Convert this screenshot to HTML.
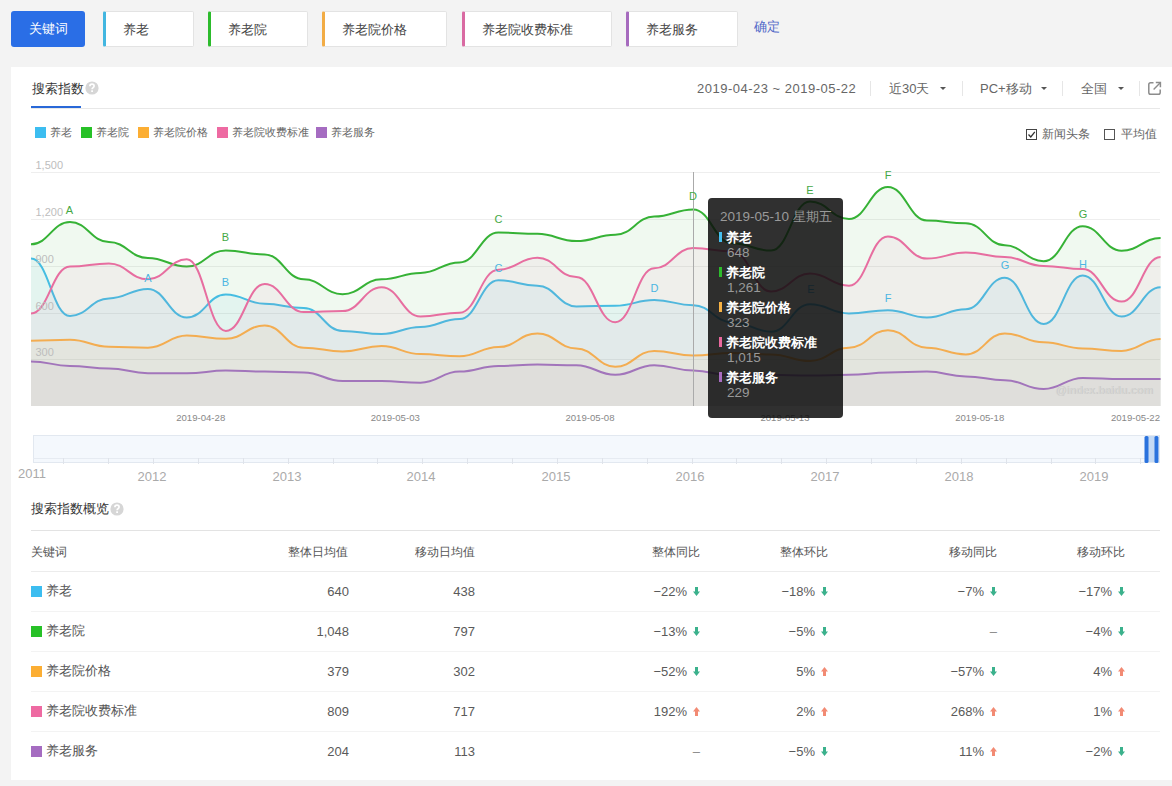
<!DOCTYPE html>
<html><head><meta charset="utf-8">
<style>
*{box-sizing:border-box;margin:0;padding:0}
html,body{width:1172px;height:786px;overflow:hidden;background:#f3f3f3;font-family:"Liberation Sans",sans-serif;color:#333}
.abs{position:absolute;white-space:nowrap}
.kbtn{position:absolute;top:11px;height:36px;background:#fff;border:1px solid #e3e3e3;border-left:3px solid;border-radius:2px;font-size:12.5px;color:#444;line-height:36px;padding-left:17px}
.main{position:absolute;left:11px;top:67px;width:1161px;height:713px;background:#fff}
.qm{position:absolute;width:13px;height:13px;border-radius:50%;background:#d4d4d4;color:#fff;font-size:11px;font-weight:bold;text-align:center;line-height:13px}
.sep{position:absolute;top:81px;width:1px;height:15px;background:#e6e6e6}
.arr{position:absolute;width:0;height:0;border-left:3px solid transparent;border-right:3px solid transparent;border-top:3px solid #555;top:87px}
.ctl{font-size:13px;color:#666;top:81px;line-height:16px}
.lg{position:absolute;top:127px;width:11px;height:11px}
.lgt{position:absolute;top:125px;font-size:11px;color:#666;line-height:14px}
svg text{font-family:"Liberation Sans",sans-serif}
.yl{font-size:11px;fill:#bdbdbd}
.mk{font-size:11px;text-anchor:middle}
.xl{font-size:9.6px;fill:#888;text-anchor:middle}
.yr{font-size:13px;fill:#aaa;text-anchor:middle}
.tt{position:absolute;left:708px;top:198px;width:135px;height:220px;background:rgba(12,12,12,0.85);border-radius:4px}
.tt .ti{position:absolute;left:12px;top:10px;font-size:13.5px;color:#9a9a9a;line-height:18px;white-space:nowrap}
.tt .bar{position:absolute;left:11px;width:3px;height:10px}
.tt .nm{position:absolute;left:18px;margin-top:1px;font-size:13px;color:#fff;font-weight:600;line-height:16px;white-space:nowrap}
.tt .vl{position:absolute;left:19px;margin-top:1px;font-size:13.5px;color:#999;line-height:16px;white-space:nowrap}
.th{position:absolute;top:544px;font-size:12px;color:#555;line-height:16px;white-space:nowrap}
.row{position:absolute;left:31px;width:1129px;height:1px;background:#f3f3f3}
.cell{position:absolute;font-size:13px;color:#5a5a5a;line-height:16px;white-space:nowrap;margin-top:1px}
.sq{position:absolute;left:31px;width:11px;height:11px}
.kw{position:absolute;left:46px;font-size:12.7px;color:#555;line-height:16px;white-space:nowrap}
.dn,.up{position:absolute;width:7px;height:9px}
</style></head><body>
<!-- top keyword row -->
<div class="abs" style="left:11px;top:11px;width:74px;height:36px;background:#2a6ee6;border-radius:3px;color:#fff;font-size:13px;font-weight:500;line-height:36px;text-align:center">关键词</div>
<div class="kbtn" style="left:103px;width:91px;border-left-color:#42b6e0">养老</div>
<div class="kbtn" style="left:208px;width:100px;border-left-color:#2cbb2c">养老院</div>
<div class="kbtn" style="left:322px;width:125px;border-left-color:#f2ac45">养老院价格</div>
<div class="kbtn" style="left:462px;width:150px;border-left-color:#d96aa2">养老院收费标准</div>
<div class="kbtn" style="left:626px;width:112px;border-left-color:#a66bbe">养老服务</div>
<div class="abs" style="left:754px;top:19px;font-size:12.5px;color:#5068c8;line-height:16px">确定</div>

<div class="main"></div>
<!-- header -->
<div class="abs" style="left:31.5px;top:80.5px;font-size:12.5px;color:#333;line-height:16px">搜索指数</div>
<svg class="abs" style="left:84px;top:80px" width="16" height="16" viewBox="0 0 16 16"><circle cx="8" cy="8" r="6.6" fill="#d6d6d6"/><path d="M5.9 6.2Q5.9 4.2 8 4.2Q10.1 4.2 10.1 6Q10.1 7 9 7.7Q8.1 8.2 8.1 9.3" fill="none" stroke="#fff" stroke-width="1.7"/><rect x="7.2" y="10.3" width="1.8" height="1.7" fill="#fff"/></svg>
<div class="abs" style="left:31px;top:108px;width:1129px;height:1px;background:#e8e8e8"></div>
<div class="abs" style="left:31px;top:106px;width:50px;height:2px;background:#2868d8"></div>

<div class="abs ctl" style="left:697px;letter-spacing:0.5px">2019-04-23 ~ 2019-05-22</div>
<div class="sep" style="left:870px"></div>
<div class="abs ctl" style="left:889px">近30天</div>
<div class="arr" style="left:940px"></div>
<div class="sep" style="left:962px"></div>
<div class="abs ctl" style="left:980px">PC+移动</div>
<div class="arr" style="left:1041px"></div>
<div class="sep" style="left:1062px"></div>
<div class="abs ctl" style="left:1081px">全国</div>
<div class="arr" style="left:1118px"></div>
<div class="sep" style="left:1139px"></div>
<svg class="abs" style="left:1147px;top:81px" width="15" height="15" viewBox="0 0 15 15"><path d="M6.5 1.8H3.6Q1.8 1.8 1.8 3.6V11.4Q1.8 13.2 3.6 13.2H11.4Q13.2 13.2 13.2 11.4V8.5" fill="none" stroke="#8c8c8c" stroke-width="1.5"/><path d="M8.8 1.6H13.4V6.2" fill="none" stroke="#8c8c8c" stroke-width="1.5"/><path d="M13 2L6.6 8.4" fill="none" stroke="#8c8c8c" stroke-width="1.4"/></svg>

<!-- legend -->
<div class="lg" style="left:35px;background:#3cbdf0"></div><div class="lgt" style="left:50px">养老</div>
<div class="lg" style="left:81px;background:#27c127"></div><div class="lgt" style="left:96px">养老院</div>
<div class="lg" style="left:138px;background:#fcae33"></div><div class="lgt" style="left:153px">养老院价格</div>
<div class="lg" style="left:217px;background:#ee6aa2"></div><div class="lgt" style="left:232px">养老院收费标准</div>
<div class="lg" style="left:316px;background:#a56cc1"></div><div class="lgt" style="left:331px">养老服务</div>

<!-- checkboxes -->
<div class="abs" style="left:1026px;top:129px;width:11px;height:11px;border:1px solid #444"></div>
<svg class="abs" style="left:1026px;top:129px" width="11" height="11"><path d="M2.5 5.5L4.8 8L8.8 2.8" fill="none" stroke="#333" stroke-width="1.3"/></svg>
<div class="abs" style="left:1042px;top:126px;font-size:12px;color:#666;line-height:16px">新闻头条</div>
<div class="abs" style="left:1104px;top:129px;width:11px;height:11px;border:1px solid #555"></div>
<div class="abs" style="left:1121px;top:126px;font-size:12px;color:#666;line-height:16px">平均值</div>

<!-- chart -->
<svg class="abs" style="left:0;top:0" width="1172" height="500" viewBox="0 0 1172 500">
<line x1="31" x2="1160" y1="172.5" y2="172.5" stroke="#eeeeee" stroke-width="1"/>
<line x1="31" x2="1160" y1="219.5" y2="219.5" stroke="#eeeeee" stroke-width="1"/>
<line x1="31" x2="1160" y1="266.5" y2="266.5" stroke="#eeeeee" stroke-width="1"/>
<line x1="31" x2="1160" y1="313.5" y2="313.5" stroke="#eeeeee" stroke-width="1"/>
<line x1="31" x2="1160" y1="359.5" y2="359.5" stroke="#eeeeee" stroke-width="1"/>
<path d="M31.0 258.6 C48.5 258.6 52.4 315.9 70.0 315.9 C87.5 315.9 91.4 298.4 108.9 298.4 C126.4 298.4 130.3 288.9 147.9 288.9 C165.4 288.9 169.3 317.5 186.8 317.5 C204.3 317.5 208.2 294.6 225.8 294.6 C243.3 294.6 247.2 303.8 264.7 303.8 C282.2 303.8 286.1 308.0 303.7 308.0 C321.2 308.0 325.1 330.9 342.6 330.9 C360.1 330.9 364.0 334.0 381.6 334.0 C399.1 334.0 403.0 327.0 420.5 327.0 C438.0 327.0 441.9 319.1 459.5 319.1 C477.0 319.1 480.9 280.3 498.4 280.3 C515.9 280.3 519.8 285.7 537.4 285.7 C554.9 285.7 558.8 306.4 576.3 306.4 C593.9 306.4 597.7 305.7 615.3 305.7 C632.8 305.7 636.7 300.0 654.2 300.0 C671.8 300.0 675.7 305.2 693.2 305.2 C710.7 305.2 714.6 322.2 732.1 322.2 C749.7 322.2 753.6 331.7 771.1 331.7 C788.6 331.7 792.5 304.3 810.0 304.3 C827.6 304.3 831.5 313.4 849.0 313.4 C866.5 313.4 870.4 310.2 887.9 310.2 C905.5 310.2 909.4 317.5 926.9 317.5 C944.4 317.5 948.3 309.2 965.8 309.2 C983.4 309.2 987.3 277.7 1004.8 277.7 C1022.3 277.7 1026.2 323.9 1043.7 323.9 C1061.3 323.9 1065.2 275.5 1082.7 275.5 C1100.2 275.5 1104.1 316.5 1121.6 316.5 C1139.2 316.5 1143.1 287.3 1160.6 287.3 L1160.6 406 L31.0 406 Z" fill="#48bff0" fill-opacity="0.08"/>
<path d="M31.0 258.6 C48.5 258.6 52.4 315.9 70.0 315.9 C87.5 315.9 91.4 298.4 108.9 298.4 C126.4 298.4 130.3 288.9 147.9 288.9 C165.4 288.9 169.3 317.5 186.8 317.5 C204.3 317.5 208.2 294.6 225.8 294.6 C243.3 294.6 247.2 303.8 264.7 303.8 C282.2 303.8 286.1 308.0 303.7 308.0 C321.2 308.0 325.1 330.9 342.6 330.9 C360.1 330.9 364.0 334.0 381.6 334.0 C399.1 334.0 403.0 327.0 420.5 327.0 C438.0 327.0 441.9 319.1 459.5 319.1 C477.0 319.1 480.9 280.3 498.4 280.3 C515.9 280.3 519.8 285.7 537.4 285.7 C554.9 285.7 558.8 306.4 576.3 306.4 C593.9 306.4 597.7 305.7 615.3 305.7 C632.8 305.7 636.7 300.0 654.2 300.0 C671.8 300.0 675.7 305.2 693.2 305.2 C710.7 305.2 714.6 322.2 732.1 322.2 C749.7 322.2 753.6 331.7 771.1 331.7 C788.6 331.7 792.5 304.3 810.0 304.3 C827.6 304.3 831.5 313.4 849.0 313.4 C866.5 313.4 870.4 310.2 887.9 310.2 C905.5 310.2 909.4 317.5 926.9 317.5 C944.4 317.5 948.3 309.2 965.8 309.2 C983.4 309.2 987.3 277.7 1004.8 277.7 C1022.3 277.7 1026.2 323.9 1043.7 323.9 C1061.3 323.9 1065.2 275.5 1082.7 275.5 C1100.2 275.5 1104.1 316.5 1121.6 316.5 C1139.2 316.5 1143.1 287.3 1160.6 287.3" fill="none" stroke="#48bff0" stroke-width="2"/>
<path d="M31.0 244.3 C48.5 244.3 52.4 222.0 70.0 222.0 C87.5 222.0 91.4 242.0 108.9 242.0 C126.4 242.0 130.3 258.0 147.9 258.0 C165.4 258.0 169.3 266.6 186.8 266.6 C204.3 266.6 208.2 250.4 225.8 250.4 C243.3 250.4 247.2 254.5 264.7 254.5 C282.2 254.5 286.1 279.3 303.7 279.3 C321.2 279.3 325.1 294.3 342.6 294.3 C360.1 294.3 364.0 279.3 381.6 279.3 C399.1 279.3 403.0 273.0 420.5 273.0 C438.0 273.0 441.9 262.4 459.5 262.4 C477.0 262.4 480.9 232.5 498.4 232.5 C515.9 232.5 519.8 233.8 537.4 233.8 C554.9 233.8 558.8 241.1 576.3 241.1 C593.9 241.1 597.7 234.8 615.3 234.8 C632.8 234.8 636.7 216.6 654.2 216.6 C671.8 216.6 675.7 209.5 693.2 209.5 C710.7 209.5 714.6 243.3 732.1 243.3 C749.7 243.3 753.6 250.6 771.1 250.6 C788.6 250.6 792.5 201.5 810.0 201.5 C827.6 201.5 831.5 218.9 849.0 218.9 C866.5 218.9 870.4 187.0 887.9 187.0 C905.5 187.0 909.4 220.5 926.9 220.5 C944.4 220.5 948.3 223.3 965.8 223.3 C983.4 223.3 987.3 245.3 1004.8 245.3 C1022.3 245.3 1026.2 261.2 1043.7 261.2 C1061.3 261.2 1065.2 226.2 1082.7 226.2 C1100.2 226.2 1104.1 250.7 1121.6 250.7 C1139.2 250.7 1143.1 238.0 1160.6 238.0 L1160.6 406 L31.0 406 Z" fill="#36b236" fill-opacity="0.075"/>
<path d="M31.0 244.3 C48.5 244.3 52.4 222.0 70.0 222.0 C87.5 222.0 91.4 242.0 108.9 242.0 C126.4 242.0 130.3 258.0 147.9 258.0 C165.4 258.0 169.3 266.6 186.8 266.6 C204.3 266.6 208.2 250.4 225.8 250.4 C243.3 250.4 247.2 254.5 264.7 254.5 C282.2 254.5 286.1 279.3 303.7 279.3 C321.2 279.3 325.1 294.3 342.6 294.3 C360.1 294.3 364.0 279.3 381.6 279.3 C399.1 279.3 403.0 273.0 420.5 273.0 C438.0 273.0 441.9 262.4 459.5 262.4 C477.0 262.4 480.9 232.5 498.4 232.5 C515.9 232.5 519.8 233.8 537.4 233.8 C554.9 233.8 558.8 241.1 576.3 241.1 C593.9 241.1 597.7 234.8 615.3 234.8 C632.8 234.8 636.7 216.6 654.2 216.6 C671.8 216.6 675.7 209.5 693.2 209.5 C710.7 209.5 714.6 243.3 732.1 243.3 C749.7 243.3 753.6 250.6 771.1 250.6 C788.6 250.6 792.5 201.5 810.0 201.5 C827.6 201.5 831.5 218.9 849.0 218.9 C866.5 218.9 870.4 187.0 887.9 187.0 C905.5 187.0 909.4 220.5 926.9 220.5 C944.4 220.5 948.3 223.3 965.8 223.3 C983.4 223.3 987.3 245.3 1004.8 245.3 C1022.3 245.3 1026.2 261.2 1043.7 261.2 C1061.3 261.2 1065.2 226.2 1082.7 226.2 C1100.2 226.2 1104.1 250.7 1121.6 250.7 C1139.2 250.7 1143.1 238.0 1160.6 238.0" fill="none" stroke="#36b236" stroke-width="2"/>
<path d="M31.0 340.7 C48.5 340.7 52.4 339.8 70.0 339.8 C87.5 339.8 91.4 346.8 108.9 346.8 C126.4 346.8 130.3 347.7 147.9 347.7 C165.4 347.7 169.3 335.6 186.8 335.6 C204.3 335.6 208.2 338.8 225.8 338.8 C243.3 338.8 247.2 325.4 264.7 325.4 C282.2 325.4 286.1 347.7 303.7 347.7 C321.2 347.7 325.1 351.5 342.6 351.5 C360.1 351.5 364.0 346.1 381.6 346.1 C399.1 346.1 403.0 354.1 420.5 354.1 C438.0 354.1 441.9 356.3 459.5 356.3 C477.0 356.3 480.9 347.1 498.4 347.1 C515.9 347.1 519.8 333.4 537.4 333.4 C554.9 333.4 558.8 348.4 576.3 348.4 C593.9 348.4 597.7 366.8 615.3 366.8 C632.8 366.8 636.7 350.9 654.2 350.9 C671.8 350.9 675.7 355.5 693.2 355.5 C710.7 355.5 714.6 352.9 732.1 352.9 C749.7 352.9 753.6 354.4 771.1 354.4 C788.6 354.4 792.5 361.0 810.0 361.0 C827.6 361.0 831.5 347.7 849.0 347.7 C866.5 347.7 870.4 330.2 887.9 330.2 C905.5 330.2 909.4 347.7 926.9 347.7 C944.4 347.7 948.3 354.4 965.8 354.4 C983.4 354.4 987.3 333.4 1004.8 333.4 C1022.3 333.4 1026.2 342.3 1043.7 342.3 C1061.3 342.3 1065.2 348.4 1082.7 348.4 C1100.2 348.4 1104.1 350.9 1121.6 350.9 C1139.2 350.9 1143.1 339.1 1160.6 339.1 L1160.6 406 L31.0 406 Z" fill="#f5b24c" fill-opacity="0.075"/>
<path d="M31.0 340.7 C48.5 340.7 52.4 339.8 70.0 339.8 C87.5 339.8 91.4 346.8 108.9 346.8 C126.4 346.8 130.3 347.7 147.9 347.7 C165.4 347.7 169.3 335.6 186.8 335.6 C204.3 335.6 208.2 338.8 225.8 338.8 C243.3 338.8 247.2 325.4 264.7 325.4 C282.2 325.4 286.1 347.7 303.7 347.7 C321.2 347.7 325.1 351.5 342.6 351.5 C360.1 351.5 364.0 346.1 381.6 346.1 C399.1 346.1 403.0 354.1 420.5 354.1 C438.0 354.1 441.9 356.3 459.5 356.3 C477.0 356.3 480.9 347.1 498.4 347.1 C515.9 347.1 519.8 333.4 537.4 333.4 C554.9 333.4 558.8 348.4 576.3 348.4 C593.9 348.4 597.7 366.8 615.3 366.8 C632.8 366.8 636.7 350.9 654.2 350.9 C671.8 350.9 675.7 355.5 693.2 355.5 C710.7 355.5 714.6 352.9 732.1 352.9 C749.7 352.9 753.6 354.4 771.1 354.4 C788.6 354.4 792.5 361.0 810.0 361.0 C827.6 361.0 831.5 347.7 849.0 347.7 C866.5 347.7 870.4 330.2 887.9 330.2 C905.5 330.2 909.4 347.7 926.9 347.7 C944.4 347.7 948.3 354.4 965.8 354.4 C983.4 354.4 987.3 333.4 1004.8 333.4 C1022.3 333.4 1026.2 342.3 1043.7 342.3 C1061.3 342.3 1065.2 348.4 1082.7 348.4 C1100.2 348.4 1104.1 350.9 1121.6 350.9 C1139.2 350.9 1143.1 339.1 1160.6 339.1" fill="none" stroke="#f5b24c" stroke-width="2"/>
<path d="M31.0 313.4 C48.5 313.4 52.4 266.6 70.0 266.6 C87.5 266.6 91.4 263.4 108.9 263.4 C126.4 263.4 130.3 279.3 147.9 279.3 C165.4 279.3 169.3 259.3 186.8 259.3 C204.3 259.3 208.2 330.9 225.8 330.9 C243.3 330.9 247.2 284.1 264.7 284.1 C282.2 284.1 286.1 312.1 303.7 312.1 C321.2 312.1 325.1 311.1 342.6 311.1 C360.1 311.1 364.0 287.3 381.6 287.3 C399.1 287.3 403.0 316.5 420.5 316.5 C438.0 316.5 441.9 312.7 459.5 312.7 C477.0 312.7 480.9 269.8 498.4 269.8 C515.9 269.8 519.8 257.7 537.4 257.7 C554.9 257.7 558.8 277.1 576.3 277.1 C593.9 277.1 597.7 322.3 615.3 322.3 C632.8 322.3 636.7 268.2 654.2 268.2 C671.8 268.2 675.7 248.0 693.2 248.0 C710.7 248.0 714.6 251.3 732.1 251.3 C749.7 251.3 753.6 291.5 771.1 291.5 C788.6 291.5 792.5 273.5 810.0 273.5 C827.6 273.5 831.5 285.7 849.0 285.7 C866.5 285.7 870.4 236.4 887.9 236.4 C905.5 236.4 909.4 258.6 926.9 258.6 C944.4 258.6 948.3 252.6 965.8 252.6 C983.4 252.6 987.3 257.0 1004.8 257.0 C1022.3 257.0 1026.2 266.0 1043.7 266.0 C1061.3 266.0 1065.2 269.1 1082.7 269.1 C1100.2 269.1 1104.1 301.6 1121.6 301.6 C1139.2 301.6 1143.1 257.0 1160.6 257.0 L1160.6 406 L31.0 406 Z" fill="#e76ea0" fill-opacity="0.065"/>
<path d="M31.0 313.4 C48.5 313.4 52.4 266.6 70.0 266.6 C87.5 266.6 91.4 263.4 108.9 263.4 C126.4 263.4 130.3 279.3 147.9 279.3 C165.4 279.3 169.3 259.3 186.8 259.3 C204.3 259.3 208.2 330.9 225.8 330.9 C243.3 330.9 247.2 284.1 264.7 284.1 C282.2 284.1 286.1 312.1 303.7 312.1 C321.2 312.1 325.1 311.1 342.6 311.1 C360.1 311.1 364.0 287.3 381.6 287.3 C399.1 287.3 403.0 316.5 420.5 316.5 C438.0 316.5 441.9 312.7 459.5 312.7 C477.0 312.7 480.9 269.8 498.4 269.8 C515.9 269.8 519.8 257.7 537.4 257.7 C554.9 257.7 558.8 277.1 576.3 277.1 C593.9 277.1 597.7 322.3 615.3 322.3 C632.8 322.3 636.7 268.2 654.2 268.2 C671.8 268.2 675.7 248.0 693.2 248.0 C710.7 248.0 714.6 251.3 732.1 251.3 C749.7 251.3 753.6 291.5 771.1 291.5 C788.6 291.5 792.5 273.5 810.0 273.5 C827.6 273.5 831.5 285.7 849.0 285.7 C866.5 285.7 870.4 236.4 887.9 236.4 C905.5 236.4 909.4 258.6 926.9 258.6 C944.4 258.6 948.3 252.6 965.8 252.6 C983.4 252.6 987.3 257.0 1004.8 257.0 C1022.3 257.0 1026.2 266.0 1043.7 266.0 C1061.3 266.0 1065.2 269.1 1082.7 269.1 C1100.2 269.1 1104.1 301.6 1121.6 301.6 C1139.2 301.6 1143.1 257.0 1160.6 257.0" fill="none" stroke="#e76ea0" stroke-width="2"/>
<path d="M31.0 361.4 C48.5 361.4 52.4 365.9 70.0 365.9 C87.5 365.9 91.4 368.4 108.9 368.4 C126.4 368.4 130.3 373.2 147.9 373.2 C165.4 373.2 169.3 373.2 186.8 373.2 C204.3 373.2 208.2 370.6 225.8 370.6 C243.3 370.6 247.2 371.6 264.7 371.6 C282.2 371.6 286.1 372.5 303.7 372.5 C321.2 372.5 325.1 381.1 342.6 381.1 C360.1 381.1 364.0 381.1 381.6 381.1 C399.1 381.1 403.0 382.7 420.5 382.7 C438.0 382.7 441.9 371.6 459.5 371.6 C477.0 371.6 480.9 365.9 498.4 365.9 C515.9 365.9 519.8 364.6 537.4 364.6 C554.9 364.6 558.8 365.2 576.3 365.2 C593.9 365.2 597.7 374.8 615.3 374.8 C632.8 374.8 636.7 365.2 654.2 365.2 C671.8 365.2 675.7 370.5 693.2 370.5 C710.7 370.5 714.6 375.6 732.1 375.6 C749.7 375.6 753.6 374.8 771.1 374.8 C788.6 374.8 792.5 375.5 810.0 375.5 C827.6 375.5 831.5 374.8 849.0 374.8 C866.5 374.8 870.4 372.5 887.9 372.5 C905.5 372.5 909.4 371.6 926.9 371.6 C944.4 371.6 948.3 376.4 965.8 376.4 C983.4 376.4 987.3 380.2 1004.8 380.2 C1022.3 380.2 1026.2 389.1 1043.7 389.1 C1061.3 389.1 1065.2 377.9 1082.7 377.9 C1100.2 377.9 1104.1 378.9 1121.6 378.9 C1139.2 378.9 1143.1 378.9 1160.6 378.9 L1160.6 406 L31.0 406 Z" fill="#a275bb" fill-opacity="0.055"/>
<path d="M31.0 361.4 C48.5 361.4 52.4 365.9 70.0 365.9 C87.5 365.9 91.4 368.4 108.9 368.4 C126.4 368.4 130.3 373.2 147.9 373.2 C165.4 373.2 169.3 373.2 186.8 373.2 C204.3 373.2 208.2 370.6 225.8 370.6 C243.3 370.6 247.2 371.6 264.7 371.6 C282.2 371.6 286.1 372.5 303.7 372.5 C321.2 372.5 325.1 381.1 342.6 381.1 C360.1 381.1 364.0 381.1 381.6 381.1 C399.1 381.1 403.0 382.7 420.5 382.7 C438.0 382.7 441.9 371.6 459.5 371.6 C477.0 371.6 480.9 365.9 498.4 365.9 C515.9 365.9 519.8 364.6 537.4 364.6 C554.9 364.6 558.8 365.2 576.3 365.2 C593.9 365.2 597.7 374.8 615.3 374.8 C632.8 374.8 636.7 365.2 654.2 365.2 C671.8 365.2 675.7 370.5 693.2 370.5 C710.7 370.5 714.6 375.6 732.1 375.6 C749.7 375.6 753.6 374.8 771.1 374.8 C788.6 374.8 792.5 375.5 810.0 375.5 C827.6 375.5 831.5 374.8 849.0 374.8 C866.5 374.8 870.4 372.5 887.9 372.5 C905.5 372.5 909.4 371.6 926.9 371.6 C944.4 371.6 948.3 376.4 965.8 376.4 C983.4 376.4 987.3 380.2 1004.8 380.2 C1022.3 380.2 1026.2 389.1 1043.7 389.1 C1061.3 389.1 1065.2 377.9 1082.7 377.9 C1100.2 377.9 1104.1 378.9 1121.6 378.9 C1139.2 378.9 1143.1 378.9 1160.6 378.9" fill="none" stroke="#a275bb" stroke-width="2"/>
<line x1="693.5" x2="693.5" y1="172" y2="406" stroke="#aaa" stroke-width="1"/>
<text x="35.5" y="168.5" class="yl">1,500</text>
<text x="35.5" y="215.5" class="yl">1,200</text>
<text x="35.5" y="262.5" class="yl">900</text>
<text x="35.5" y="309.5" class="yl">600</text>
<text x="35.5" y="356" class="yl">300</text>
<text x="148" y="281.5" class="mk" fill="#4cb6e2">A</text>
<text x="225.5" y="285.5" class="mk" fill="#4cb6e2">B</text>
<text x="498.5" y="271.5" class="mk" fill="#4cb6e2">C</text>
<text x="654.5" y="292" class="mk" fill="#4cb6e2">D</text>
<text x="811" y="293" class="mk" fill="#4cb6e2">E</text>
<text x="888" y="301.5" class="mk" fill="#4cb6e2">F</text>
<text x="1005" y="269" class="mk" fill="#4cb6e2">G</text>
<text x="1083" y="267.5" class="mk" fill="#4cb6e2">H</text>
<text x="69.5" y="214" class="mk" fill="#44a844">A</text>
<text x="225.5" y="241" class="mk" fill="#44a844">B</text>
<text x="498.5" y="223" class="mk" fill="#44a844">C</text>
<text x="693" y="200" class="mk" fill="#44a844">D</text>
<text x="810" y="194" class="mk" fill="#44a844">E</text>
<text x="888" y="178.5" class="mk" fill="#44a844">F</text>
<text x="1083" y="218" class="mk" fill="#44a844">G</text>
<text x="1153.5" y="394" font-size="11" font-weight="bold" fill="#c4c4c2" text-anchor="end">@index.baidu.com</text>
<text x="1153" y="393.5" font-size="11" font-weight="bold" fill="#d6d6d4" text-anchor="end">@index.baidu.com</text>
<text x="200.7" y="421.3" class="xl">2019-04-28</text>
<text x="395.3" y="421.3" class="xl">2019-05-03</text>
<text x="590" y="421.3" class="xl">2019-05-08</text>
<text x="785" y="421.3" class="xl">2019-05-13</text>
<text x="979.7" y="421.3" class="xl">2019-05-18</text>
<text x="1135.5" y="421.3" class="xl">2019-05-22</text>
<rect x="33.5" y="435.5" width="1126" height="27" fill="#f4f8fd" stroke="#e2e8f0" stroke-width="1"/>
<line x1="33" x2="1160" y1="458.5" y2="458.5" stroke="#e6ebf2" stroke-width="1"/>
<rect x="1147" y="436" width="9" height="26" fill="#c5daf4"/>
<rect x="1144.5" y="436" width="4" height="27" rx="1.5" fill="#2a72dd"/>
<rect x="1154.5" y="436" width="4" height="27" rx="1.5" fill="#2a72dd"/>
<line x1="63.5" x2="63.5" y1="458" y2="464" stroke="#dfe3ea" stroke-width="1"/>
<line x1="108.5" x2="108.5" y1="458" y2="464" stroke="#dfe3ea" stroke-width="1"/>
<line x1="153.5" x2="153.5" y1="458" y2="464" stroke="#dfe3ea" stroke-width="1"/>
<line x1="198.5" x2="198.5" y1="458" y2="464" stroke="#dfe3ea" stroke-width="1"/>
<line x1="243.5" x2="243.5" y1="458" y2="464" stroke="#dfe3ea" stroke-width="1"/>
<line x1="288.5" x2="288.5" y1="458" y2="464" stroke="#dfe3ea" stroke-width="1"/>
<line x1="333.5" x2="333.5" y1="458" y2="464" stroke="#dfe3ea" stroke-width="1"/>
<line x1="377.5" x2="377.5" y1="458" y2="464" stroke="#dfe3ea" stroke-width="1"/>
<line x1="422.5" x2="422.5" y1="458" y2="464" stroke="#dfe3ea" stroke-width="1"/>
<line x1="467.5" x2="467.5" y1="458" y2="464" stroke="#dfe3ea" stroke-width="1"/>
<line x1="512.5" x2="512.5" y1="458" y2="464" stroke="#dfe3ea" stroke-width="1"/>
<line x1="557.5" x2="557.5" y1="458" y2="464" stroke="#dfe3ea" stroke-width="1"/>
<line x1="602.5" x2="602.5" y1="458" y2="464" stroke="#dfe3ea" stroke-width="1"/>
<line x1="647.5" x2="647.5" y1="458" y2="464" stroke="#dfe3ea" stroke-width="1"/>
<line x1="692.5" x2="692.5" y1="458" y2="464" stroke="#dfe3ea" stroke-width="1"/>
<line x1="736.5" x2="736.5" y1="458" y2="464" stroke="#dfe3ea" stroke-width="1"/>
<line x1="781.5" x2="781.5" y1="458" y2="464" stroke="#dfe3ea" stroke-width="1"/>
<line x1="826.5" x2="826.5" y1="458" y2="464" stroke="#dfe3ea" stroke-width="1"/>
<line x1="871.5" x2="871.5" y1="458" y2="464" stroke="#dfe3ea" stroke-width="1"/>
<line x1="916.5" x2="916.5" y1="458" y2="464" stroke="#dfe3ea" stroke-width="1"/>
<line x1="961.5" x2="961.5" y1="458" y2="464" stroke="#dfe3ea" stroke-width="1"/>
<line x1="1006.5" x2="1006.5" y1="458" y2="464" stroke="#dfe3ea" stroke-width="1"/>
<line x1="1051.5" x2="1051.5" y1="458" y2="464" stroke="#dfe3ea" stroke-width="1"/>
<line x1="1095.5" x2="1095.5" y1="458" y2="464" stroke="#dfe3ea" stroke-width="1"/>
<line x1="1140.5" x2="1140.5" y1="458" y2="464" stroke="#dfe3ea" stroke-width="1"/>
<text x="32" y="478" class="yr">2011</text>
<text x="152" y="481" class="yr">2012</text>
<text x="287" y="481" class="yr">2013</text>
<text x="421" y="481" class="yr">2014</text>
<text x="556" y="481" class="yr">2015</text>
<text x="690" y="481" class="yr">2016</text>
<text x="825" y="481" class="yr">2017</text>
<text x="959" y="481" class="yr">2018</text>
<text x="1094" y="481" class="yr">2019</text>
</svg>

<!-- tooltip -->
<div class="tt">
 <div class="ti">2019-05-10 <span style="font-size:13px">星期五</span></div>
 <div class="bar" style="top:34px;background:#45bff0"></div><div class="nm" style="top:31px">养老</div><div class="vl" style="top:46px">648</div>
 <div class="bar" style="top:69px;background:#2cbb2c"></div><div class="nm" style="top:66px">养老院</div><div class="vl" style="top:81px">1,261</div>
 <div class="bar" style="top:104px;background:#f7b244"></div><div class="nm" style="top:101px">养老院价格</div><div class="vl" style="top:116px">323</div>
 <div class="bar" style="top:139px;background:#e9689e"></div><div class="nm" style="top:136px">养老院收费标准</div><div class="vl" style="top:151px">1,015</div>
 <div class="bar" style="top:174px;background:#a86cc1"></div><div class="nm" style="top:171px">养老服务</div><div class="vl" style="top:186px">229</div>
</div>

<!-- overview -->
<div class="abs" style="left:31px;top:501px;font-size:12.5px;color:#333;line-height:16px">搜索指数概览</div>
<svg class="abs" style="left:109px;top:501px" width="16" height="16" viewBox="0 0 16 16"><circle cx="8" cy="8" r="6.6" fill="#d6d6d6"/><path d="M5.9 6.2Q5.9 4.2 8 4.2Q10.1 4.2 10.1 6Q10.1 7 9 7.7Q8.1 8.2 8.1 9.3" fill="none" stroke="#fff" stroke-width="1.7"/><rect x="7.2" y="10.3" width="1.8" height="1.7" fill="#fff"/></svg>
<div class="abs" style="left:31px;top:530px;width:1129px;height:1px;background:#e3e3e3"></div>

<div class="th" style="left:31px">关键词</div>
<div class="th" style="right:824px">整体日均值</div>
<div class="th" style="right:697px">移动日均值</div>
<div class="th" style="right:472px">整体同比</div>
<div class="th" style="right:344px">整体环比</div>
<div class="th" style="right:175px">移动同比</div>
<div class="th" style="right:47px">移动环比</div>
<div class="row" style="top:571px;background:#ececec"></div>
<div class="row" style="top:611px"></div>
<div class="row" style="top:651px"></div>
<div class="row" style="top:691px"></div>
<div class="row" style="top:731px"></div>

<div class="sq" style="top:586px;background:#3cbdf0"></div>
<div class="kw" style="top:583px">养老</div>
<div class="cell" style="right:823px;top:583px">640</div>
<div class="cell" style="right:697px;top:583px">438</div>
<div class="cell" style="right:485px;top:583px">−22%</div>
<svg class="dn" style="left:693px;top:587px" width="7" height="9" viewBox="0 0 7 9"><path d="M2 0H5V4.5H7L3.5 9L0 4.5H2Z" fill="#3bb18c"/></svg>
<div class="cell" style="right:357px;top:583px">−18%</div>
<svg class="dn" style="left:821px;top:587px" width="7" height="9" viewBox="0 0 7 9"><path d="M2 0H5V4.5H7L3.5 9L0 4.5H2Z" fill="#3bb18c"/></svg>
<div class="cell" style="right:188px;top:583px">−7%</div>
<svg class="dn" style="left:990px;top:587px" width="7" height="9" viewBox="0 0 7 9"><path d="M2 0H5V4.5H7L3.5 9L0 4.5H2Z" fill="#3bb18c"/></svg>
<div class="cell" style="right:60px;top:583px">−17%</div>
<svg class="dn" style="left:1118px;top:587px" width="7" height="9" viewBox="0 0 7 9"><path d="M2 0H5V4.5H7L3.5 9L0 4.5H2Z" fill="#3bb18c"/></svg>
<div class="sq" style="top:626px;background:#27c127"></div>
<div class="kw" style="top:623px">养老院</div>
<div class="cell" style="right:823px;top:623px">1,048</div>
<div class="cell" style="right:697px;top:623px">797</div>
<div class="cell" style="right:485px;top:623px">−13%</div>
<svg class="dn" style="left:693px;top:627px" width="7" height="9" viewBox="0 0 7 9"><path d="M2 0H5V4.5H7L3.5 9L0 4.5H2Z" fill="#3bb18c"/></svg>
<div class="cell" style="right:357px;top:623px">−5%</div>
<svg class="dn" style="left:821px;top:627px" width="7" height="9" viewBox="0 0 7 9"><path d="M2 0H5V4.5H7L3.5 9L0 4.5H2Z" fill="#3bb18c"/></svg>
<div class="cell" style="right:175px;top:623px;color:#888">–</div>
<div class="cell" style="right:60px;top:623px">−4%</div>
<svg class="dn" style="left:1118px;top:627px" width="7" height="9" viewBox="0 0 7 9"><path d="M2 0H5V4.5H7L3.5 9L0 4.5H2Z" fill="#3bb18c"/></svg>
<div class="sq" style="top:666px;background:#fcae33"></div>
<div class="kw" style="top:663px">养老院价格</div>
<div class="cell" style="right:823px;top:663px">379</div>
<div class="cell" style="right:697px;top:663px">302</div>
<div class="cell" style="right:485px;top:663px">−52%</div>
<svg class="dn" style="left:693px;top:667px" width="7" height="9" viewBox="0 0 7 9"><path d="M2 0H5V4.5H7L3.5 9L0 4.5H2Z" fill="#3bb18c"/></svg>
<div class="cell" style="right:357px;top:663px">5%</div>
<svg class="up" style="left:821px;top:667px" width="7" height="9" viewBox="0 0 7 9"><path d="M2 9H5V4.5H7L3.5 0L0 4.5H2Z" fill="#f28a73"/></svg>
<div class="cell" style="right:188px;top:663px">−57%</div>
<svg class="dn" style="left:990px;top:667px" width="7" height="9" viewBox="0 0 7 9"><path d="M2 0H5V4.5H7L3.5 9L0 4.5H2Z" fill="#3bb18c"/></svg>
<div class="cell" style="right:60px;top:663px">4%</div>
<svg class="up" style="left:1118px;top:667px" width="7" height="9" viewBox="0 0 7 9"><path d="M2 9H5V4.5H7L3.5 0L0 4.5H2Z" fill="#f28a73"/></svg>
<div class="sq" style="top:706px;background:#ee6aa2"></div>
<div class="kw" style="top:703px">养老院收费标准</div>
<div class="cell" style="right:823px;top:703px">809</div>
<div class="cell" style="right:697px;top:703px">717</div>
<div class="cell" style="right:485px;top:703px">192%</div>
<svg class="up" style="left:693px;top:707px" width="7" height="9" viewBox="0 0 7 9"><path d="M2 9H5V4.5H7L3.5 0L0 4.5H2Z" fill="#f28a73"/></svg>
<div class="cell" style="right:357px;top:703px">2%</div>
<svg class="up" style="left:821px;top:707px" width="7" height="9" viewBox="0 0 7 9"><path d="M2 9H5V4.5H7L3.5 0L0 4.5H2Z" fill="#f28a73"/></svg>
<div class="cell" style="right:188px;top:703px">268%</div>
<svg class="up" style="left:990px;top:707px" width="7" height="9" viewBox="0 0 7 9"><path d="M2 9H5V4.5H7L3.5 0L0 4.5H2Z" fill="#f28a73"/></svg>
<div class="cell" style="right:60px;top:703px">1%</div>
<svg class="up" style="left:1118px;top:707px" width="7" height="9" viewBox="0 0 7 9"><path d="M2 9H5V4.5H7L3.5 0L0 4.5H2Z" fill="#f28a73"/></svg>
<div class="sq" style="top:746px;background:#a56cc1"></div>
<div class="kw" style="top:743px">养老服务</div>
<div class="cell" style="right:823px;top:743px">204</div>
<div class="cell" style="right:697px;top:743px">113</div>
<div class="cell" style="right:472px;top:743px;color:#888">–</div>
<div class="cell" style="right:357px;top:743px">−5%</div>
<svg class="dn" style="left:821px;top:747px" width="7" height="9" viewBox="0 0 7 9"><path d="M2 0H5V4.5H7L3.5 9L0 4.5H2Z" fill="#3bb18c"/></svg>
<div class="cell" style="right:188px;top:743px">11%</div>
<svg class="up" style="left:990px;top:747px" width="7" height="9" viewBox="0 0 7 9"><path d="M2 9H5V4.5H7L3.5 0L0 4.5H2Z" fill="#f28a73"/></svg>
<div class="cell" style="right:60px;top:743px">−2%</div>
<svg class="dn" style="left:1118px;top:747px" width="7" height="9" viewBox="0 0 7 9"><path d="M2 0H5V4.5H7L3.5 9L0 4.5H2Z" fill="#3bb18c"/></svg>
</body></html>
